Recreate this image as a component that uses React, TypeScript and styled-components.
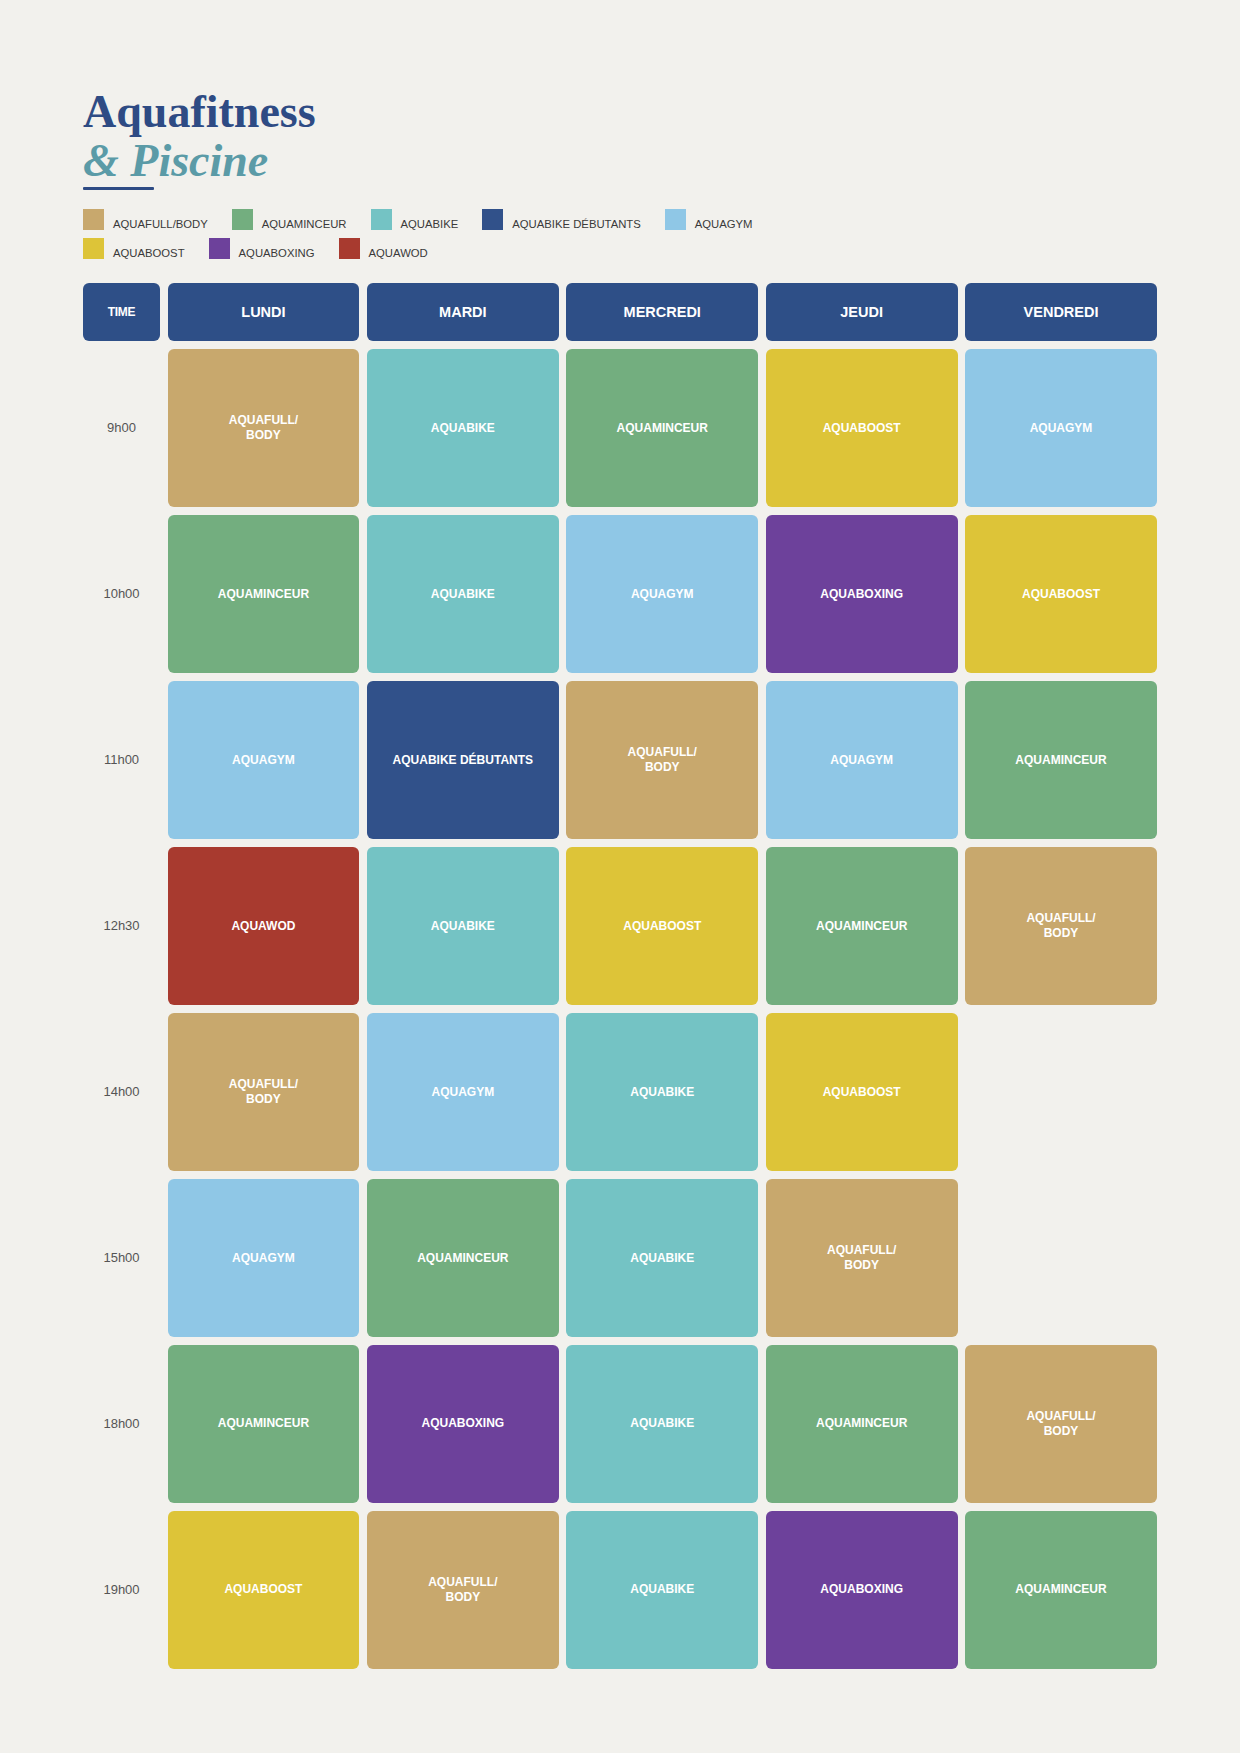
import React from "react";
import styled, { createGlobalStyle } from "styled-components";

type Kind = "full" | "minceur" | "bike" | "debut" | "gym" | "boost" | "boxing" | "wod";

const COLORS: Record<Kind, string> = {
  full: "#c8a86d",
  minceur: "#73ae7f",
  bike: "#74c3c4",
  debut: "#31518a",
  gym: "#8fc7e6",
  boost: "#ddc438",
  boxing: "#6d419b",
  wod: "#a83a2f",
};

const LABELS: Record<Kind, React.ReactNode> = {
  full: (
    <>
      AQUAFULL/
      <br />
      BODY
    </>
  ),
  minceur: "AQUAMINCEUR",
  bike: "AQUABIKE",
  debut: "AQUABIKE DÉBUTANTS",
  gym: "AQUAGYM",
  boost: "AQUABOOST",
  boxing: "AQUABOXING",
  wod: "AQUAWOD",
};

const LEGEND: { kind: Kind; label: string }[] = [
  { kind: "full", label: "AQUAFULL/BODY" },
  { kind: "minceur", label: "AQUAMINCEUR" },
  { kind: "bike", label: "AQUABIKE" },
  { kind: "debut", label: "AQUABIKE DÉBUTANTS" },
  { kind: "gym", label: "AQUAGYM" },
  { kind: "boost", label: "AQUABOOST" },
  { kind: "boxing", label: "AQUABOXING" },
  { kind: "wod", label: "AQUAWOD" },
];

const DAYS = ["LUNDI", "MARDI", "MERCREDI", "JEUDI", "VENDREDI"];

const SCHEDULE: { time: string; slots: (Kind | null)[] }[] = [
  { time: "9h00", slots: ["full", "bike", "minceur", "boost", "gym"] },
  { time: "10h00", slots: ["minceur", "bike", "gym", "boxing", "boost"] },
  { time: "11h00", slots: ["gym", "debut", "full", "gym", "minceur"] },
  { time: "12h30", slots: ["wod", "bike", "boost", "minceur", "full"] },
  { time: "14h00", slots: ["full", "gym", "bike", "boost", null] },
  { time: "15h00", slots: ["gym", "minceur", "bike", "full", null] },
  { time: "18h00", slots: ["minceur", "boxing", "bike", "minceur", "full"] },
  { time: "19h00", slots: ["boost", "full", "bike", "boxing", "minceur"] },
];

const GlobalStyle = createGlobalStyle`
  html, body {
    margin: 0;
    padding: 0;
    background: #f2f1ed;
  }
  body {
    font-family: "Liberation Sans", Arial, sans-serif;
  }
`;

const Page = styled.div`
  width: 1240px;
  min-height: 1753px;
  box-sizing: border-box;
  padding: 87px 83px 0 83px;
  background: #f2f1ed;
`;

const Title = styled.h1`
  margin: 0;
  font-family: "Liberation Serif", "Times New Roman", serif;
  font-weight: 700;
  font-size: 46px;
  line-height: 49px;
  color: #2e4b84;
`;

const Accent = styled.span`
  display: block;
  font-style: italic;
  color: #5b9ba7;
`;

const Rule = styled.div`
  width: 71px;
  height: 3.5px;
  margin-top: 1.5px;
  background: #2e4b84;
  border-radius: 1px;
`;

const Legend = styled.div`
  display: flex;
  flex-wrap: wrap;
  max-width: 720px;
  column-gap: 24px;
  row-gap: 8px;
  margin-top: 19px;
`;

const LegendItem = styled.div`
  display: flex;
  align-items: flex-end;
  gap: 9px;
`;

const Swatch = styled.span<{ $color: string }>`
  width: 21px;
  height: 21px;
  background: ${({ $color }) => $color};
  display: block;
`;

const LegendLabel = styled.span`
  font-size: 11.3px;
  line-height: 1;
  color: #3a3a3a;
`;

const Grid = styled.div`
  display: grid;
  grid-template-columns: 77px repeat(5, 1fr);
  grid-template-rows: 58.5px repeat(8, 158.3px);
  column-gap: 7.5px;
  row-gap: 7.7px;
  margin-top: 23.5px;
`;

const HeadCell = styled.div<{ $small?: boolean }>`
  display: flex;
  align-items: center;
  justify-content: center;
  background: #2e4f87;
  border-radius: 6px;
  color: #ffffff;
  font-weight: 700;
  font-size: ${({ $small }) => ($small ? "12px" : "14.5px")};
  letter-spacing: ${({ $small }) => ($small ? "-0.3px" : "0")};
`;

const TimeCell = styled.div`
  display: flex;
  align-items: center;
  justify-content: center;
  font-size: 13px;
  color: #555555;
`;

const ClassCell = styled.div<{ $color: string }>`
  display: flex;
  align-items: center;
  justify-content: center;
  text-align: center;
  background: ${({ $color }) => $color};
  border-radius: 6px;
  color: #ffffff;
  font-weight: 700;
  font-size: 12px;
  line-height: 14.5px;
`;

const Empty = styled.div``;

export default function App() {
  return (
    <>
      <GlobalStyle />
      <Page>
        <Title>
          Aquafitness
          <Accent>&amp; Piscine</Accent>
        </Title>
        <Rule />
        <Legend>
          {LEGEND.map((l) => (
            <LegendItem key={l.kind}>
              <Swatch $color={COLORS[l.kind]} />
              <LegendLabel>{l.label}</LegendLabel>
            </LegendItem>
          ))}
        </Legend>
        <Grid>
          <HeadCell $small>TIME</HeadCell>
          {DAYS.map((d) => (
            <HeadCell key={d}>{d}</HeadCell>
          ))}
          {SCHEDULE.map((row) => (
            <React.Fragment key={row.time}>
              <TimeCell>{row.time}</TimeCell>
              {row.slots.map((k, i) =>
                k ? (
                  <ClassCell key={i} $color={COLORS[k]}>
                    {LABELS[k]}
                  </ClassCell>
                ) : (
                  <Empty key={i} />
                )
              )}
            </React.Fragment>
          ))}
        </Grid>
      </Page>
    </>
  );
}
